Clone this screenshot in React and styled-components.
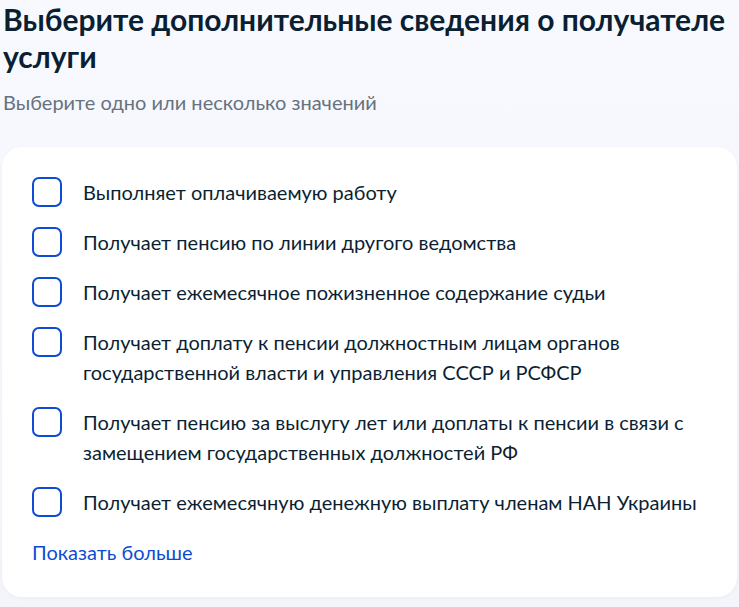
import React from 'react';
import styled, { createGlobalStyle } from 'styled-components';

const GlobalStyle = createGlobalStyle`
  html, body {
    margin: 0;
    padding: 0;
    background: #f5f7fd;
  }
  body {
    font-family: Lato, "Noto Sans", sans-serif;
    color: #0b1f33;
  }
`;

const Page = styled.div`
  padding: 1px 2px 9px 2px;
  min-height: 597px;
  background: linear-gradient(#f8f9fe, #f3f5fb);
`;

const Title = styled.h2`
  margin: 0 0 0 1px;
  font-size: 30px;
  line-height: 37px;
  font-weight: 700;
  color: #0b1f33;
`;

const Subtitle = styled.p`
  margin: 12px 0 30px 1px;
  font-size: 20px;
  line-height: 30px;
  color: #66727f;
`;

const Card = styled.div`
  background: #ffffff;
  border-radius: 20px;
  padding: 30px 30px;
  box-shadow: 0 1px 4px rgba(11, 31, 51, 0.04);
  display: flex;
  flex-direction: column;
  gap: 20px;
`;

const Option = styled.label`
  display: flex;
  align-items: flex-start;
  gap: 21px;
  cursor: pointer;
`;

const Box = styled.span`
  flex: 0 0 auto;
  width: 30px;
  height: 30px;
  box-sizing: border-box;
  border: 2px solid #0d4cd3;
  border-radius: 7px;
  background: ${p => (p.checked ? '#0d4cd3' : '#fff')};
`;

const Label = styled.span`
  font-size: 20px;
  line-height: 30px;
  color: #0b1f33;
`;

const MoreLink = styled.a`
  font-size: 20px;
  line-height: 30px;
  color: #0d4cd3;
  text-decoration: none;
  cursor: pointer;
`;

const options = [
  'Выполняет оплачиваемую работу',
  'Получает пенсию по линии другого ведомства',
  'Получает ежемесячное пожизненное содержание судьи',
  'Получает доплату к пенсии должностным лицам органов государственной власти и управления СССР и РСФСР',
  'Получает пенсию за выслугу лет или доплаты к пенсии в связи с замещением государственных должностей РФ',
  'Получает ежемесячную денежную выплату членам НАН Украины',
];

export default function App() {
  const [checked, setChecked] = React.useState({});

  return (
    <>
      <GlobalStyle />
      <Page>
        <Title>Выберите дополнительные сведения о получателе услуги</Title>
        <Subtitle>Выберите одно или несколько значений</Subtitle>
        <Card>
          {options.map((text, i) => (
            <Option key={i} onClick={() => setChecked(c => ({ ...c, [i]: !c[i] }))}>
              <Box checked={!!checked[i]} />
              <Label>{text}</Label>
            </Option>
          ))}
          <MoreLink>Показать больше</MoreLink>
        </Card>
      </Page>
    </>
  );
}
